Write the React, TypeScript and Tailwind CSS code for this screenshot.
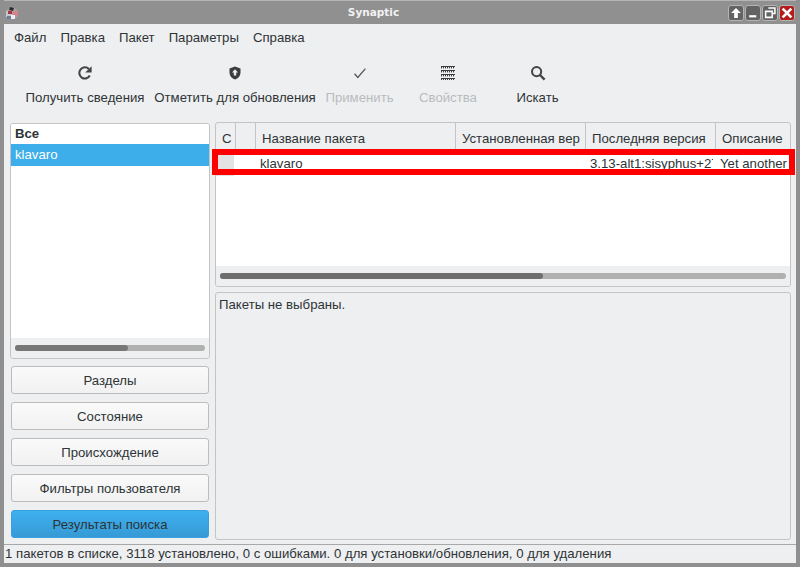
import React from "react";

const menus = ["Файл", "Правка", "Пакет", "Параметры", "Справка"];

function RefreshIcon() {
  return (
    <svg width="16" height="16" viewBox="0 0 16 16" fill="none">
      <path d="M12.8 10.6A5.6 5.6 0 1 1 11.9 4" stroke="#444" strokeWidth="2.1" />
      <path d="M14.6 1.2v6.4H8.2z" fill="#444" />
    </svg>
  );
}

function ShieldIcon() {
  return (
    <svg width="16" height="16" viewBox="0 0 16 16">
      <path d="M8 1.5 13.5 3.4v4.4c0 3.2-2.4 5.6-5.5 6.8-3.1-1.2-5.5-3.6-5.5-6.8V3.4z" fill="#3c3c3c" />
      <path d="M8 4.3 11 7.6H9.2v3H6.8v-3H5z" fill="#eeeff1" />
    </svg>
  );
}

function CheckIcon() {
  return (
    <svg width="16" height="16" viewBox="0 0 16 16" fill="none">
      <path d="M2.5 8.8 5.8 12.4 13.4 3.6" stroke="#555" strokeWidth="1.3" />
    </svg>
  );
}

function PropertiesIcon() {
  return (
    <svg width="16" height="16" viewBox="0 0 16 16" fill="none">
      {[1.5, 5.5, 9.5, 13.5].map((y) => (
        <path key={y} d={`M1 ${y}h14`} stroke="#3c3c3c" />
      ))}
      {[2.5, 6.5, 10.5, 14.5].map((y) => (
        <path key={y} d={`M1 ${y}h14`} stroke="#3c3c3c" strokeDasharray="1 1" />
      ))}
      {[3.5, 7.5, 11.5].map((y) => (
        <path key={y} d={`M1 ${y}h14`} stroke="#777" strokeDasharray="1 1" strokeOpacity="0.6" />
      ))}
    </svg>
  );
}

function SearchIcon() {
  return (
    <svg width="16" height="16" viewBox="0 0 16 16" fill="none">
      <circle cx="6.6" cy="6.6" r="4.6" stroke="#444" strokeWidth="2" />
      <path d="M10 10l4.6 4.6" stroke="#444" strokeWidth="2.4" />
    </svg>
  );
}

function AppIcon() {
  return (
    <svg width="14" height="14" viewBox="0 0 14 14">
      <circle cx="7" cy="7.5" r="6" fill="#a8a4a6" />
      <path d="M5 1 9 2 8 5 4 4z" fill="#33282b" />
      <rect x="1" y="5" width="6" height="6" fill="#c2c8d0" />
      <rect x="3" y="5" width="4" height="3" fill="#ad3438" />
      <rect x="8" y="5" width="5" height="5" rx="1" fill="#d9808f" />
      <rect x="6" y="9" width="4" height="4" fill="#eeeef2" />
      <rect x="2" y="10" width="4" height="3" fill="#6f7f92" />
    </svg>
  );
}

function WindowButton({ red, children }: { red?: boolean; children: React.ReactNode }) {
  return (
    <div
      className={`flex h-[16px] w-[16px] items-center justify-center rounded-[3px] border border-[#b4b4b4] ${
        red ? "bg-[#b41c1c]" : "bg-[#636363]"
      }`}
    >
      <svg width="12" height="12" viewBox="0 0 11 11">
        {children}
      </svg>
    </div>
  );
}

function ToolButton({
  width,
  label,
  disabled,
  children,
}: {
  width: string;
  label: string;
  disabled?: boolean;
  children: React.ReactNode;
}) {
  return (
    <div className={`flex shrink-0 flex-col items-center ${width}`}>
      <div className="flex h-4 items-center justify-center">{children}</div>
      <div className={`mt-[9px] whitespace-nowrap leading-[16px] ${disabled ? "text-[#b9bcbe]" : "text-[#2e3436]"}`}>
        {label}
      </div>
    </div>
  );
}

function FilterButton({ label, active }: { label: string; active?: boolean }) {
  return (
    <div
      className={`flex h-[28px] items-center justify-center rounded-[3px] border pt-[2px] ${
        active
          ? "border-[#3a9fdd] bg-gradient-to-b from-[#3fb0ee] to-[#359ad6]"
          : "border-[#bcbcbc] bg-gradient-to-b from-[#fafafa] to-[#f1f1f1]"
      }`}
    >
      {label}
    </div>
  );
}

function HeaderCell({ width, label, last }: { width: string; label?: string; last?: boolean }) {
  return (
    <div
      className={`flex h-full shrink-0 items-center overflow-hidden whitespace-nowrap pl-[6px] pt-[5px] ${width} ${
        last ? "" : "border-r border-[#c4c4c4]"
      }`}
    >
      {label}
    </div>
  );
}

function Scrollbar({ thumb, dark }: { thumb: string; dark: string }) {
  return (
    <div className="flex h-[20px] shrink-0 items-center bg-[#eeeff1] px-[4px]">
      <div className="h-[6px] w-full rounded-[3px] bg-[#b0b0b0]">
        <div className={`h-full rounded-[3px] ${thumb} ${dark}`} />
      </div>
    </div>
  );
}

export default function App() {
  return (
    <div className="relative flex h-[567px] w-[800px] flex-col overflow-hidden border-x-[4px] border-b-[4px] border-[#8f8f8f] bg-[#eeeff1] font-['Liberation_Sans',sans-serif] text-[13.2px] text-[#2e3436]">
      {/* window title bar */}
      <header className="relative flex h-[24px] shrink-0 items-center justify-center border-t border-[#b5b5b5] bg-[#909090] pt-[1px] font-['DejaVu_Sans',sans-serif] text-[10.5px] font-bold text-[#f2f2f2]">
        <div className="absolute left-[1px] top-[5px]">
          <AppIcon />
        </div>
        <span className="ml-[-53px]">Synaptic</span>
        <div className="absolute right-[1px] top-[4px] flex gap-[1px]">
          <WindowButton>
            <path d="M5.5 1 10 5.5H7.2V10H3.8V5.5H1z" fill="#fff" />
          </WindowButton>
          <WindowButton>
            <rect x="2" y="7.5" width="6.5" height="2" fill="#fff" />
          </WindowButton>
          <WindowButton>
            <path d="M4 1h6v5H8M1.5 4h6v5.5h-6z" fill="none" stroke="#fff" strokeWidth="1.4" />
          </WindowButton>
          <WindowButton red>
            <path d="M1.5 1.5l8 8M9.5 1.5l-8 8" stroke="#fff" strokeWidth="2.4" />
          </WindowButton>
        </div>
      </header>

      {/* menu bar */}
      <nav className="flex h-[27px] shrink-0 items-center gap-[14px] pl-[10px] pt-[1px] text-[#2e3436]">
        {menus.map((m) => (
          <span key={m}>{m}</span>
        ))}
      </nav>

      {/* toolbar */}
      <div className="flex h-[71px] shrink-0 pl-[16px] pt-[14px]">
        <ToolButton width="w-[130px]" label="Получить сведения">
          <RefreshIcon />
        </ToolButton>
        <ToolButton width="w-[170px]" label="Отметить для обновления">
          <ShieldIcon />
        </ToolButton>
        <ToolButton width="w-[79px]" label="Применить" disabled>
          <CheckIcon />
        </ToolButton>
        <ToolButton width="w-[98px]" label="Свойства" disabled>
          <PropertiesIcon />
        </ToolButton>
        <ToolButton width="w-[81px]" label="Искать">
          <SearchIcon />
        </ToolButton>
      </div>

      {/* panes */}
      <main className="flex min-h-0 flex-1 pl-[6px] pr-[5px]">
        <aside className="mr-[5px] flex w-[200px] shrink-0 flex-col pt-[1px]">
          <div className="flex h-[236px] shrink-0 flex-col overflow-hidden rounded-[3px] border border-[#c4c4c4]">
            <div className="flex-1 bg-white">
              <div className="flex h-[20px] items-center pl-[4px] font-bold">Все</div>
              <div className="flex h-[22px] items-center bg-[#3daee9] pl-[4px] text-white">klavaro</div>
            </div>
            <Scrollbar thumb="w-[59.5%]" dark="bg-[#777777]" />
          </div>
          <div className="mt-[7px] flex flex-col gap-[8px] px-[1px]">
            <FilterButton label="Разделы" />
            <FilterButton label="Состояние" />
            <FilterButton label="Происхождение" />
            <FilterButton label="Фильтры пользователя" />
            <FilterButton label="Результаты поиска" active />
          </div>
        </aside>

        <section className="flex min-w-0 flex-1 flex-col">
          <div className="flex h-[165px] shrink-0 flex-col overflow-hidden rounded-[3px] border border-[#c4c4c4]">
            <div className="flex h-[27px] shrink-0 items-center border-b border-[#c4c4c4]">
              <HeaderCell width="w-[20px]" label="С" />
              <HeaderCell width="w-[20px]" />
              <HeaderCell width="w-[200px]" label="Название пакета" />
              <HeaderCell width="w-[130px]" label="Установленная вер" />
              <HeaderCell width="w-[130px]" label="Последняя версия" />
              <HeaderCell width="w-[73px]" label="Описание" last />
            </div>
            <div className="flex-1 bg-white">
              <div className="flex h-[26px] items-center pt-[2px]">
                <div className="h-full w-[18px] shrink-0 bg-[#e3e3e3]" />
                <div className="w-[26px] shrink-0" />
                <div className="w-[330px] shrink-0">klavaro</div>
                <div className="mr-[3px] w-[123px] shrink-0 overflow-hidden whitespace-nowrap">3.13-alt1:sisyphus+27</div>
                <div className="overflow-hidden whitespace-nowrap pl-[4px]">Yet another</div>
              </div>
            </div>
            <Scrollbar thumb="w-[57%]" dark="bg-[#6e6e6e]" />
          </div>
          <div className="mt-[5px] h-[248px] shrink-0 rounded-[3px] border border-[#c4c4c4] px-[3px] pt-[4px] leading-[16px]">
            Пакеты не выбраны.
          </div>
        </section>
      </main>

      {/* status bar */}
      <footer className="flex h-[19px] shrink-0 items-center border-t border-[#a8a8a8] pl-[1px] leading-none">
        1 пакетов в списке, 3118 установлено, 0 с ошибками. 0 для установки/обновления, 0 для удаления
      </footer>

      {/* highlight drawn over the package row */}
      <div className="pointer-events-none absolute left-[208px] top-[149px] h-[26px] w-[583px] border-[6px] border-[#ff0000]" />
    </div>
  );
}
